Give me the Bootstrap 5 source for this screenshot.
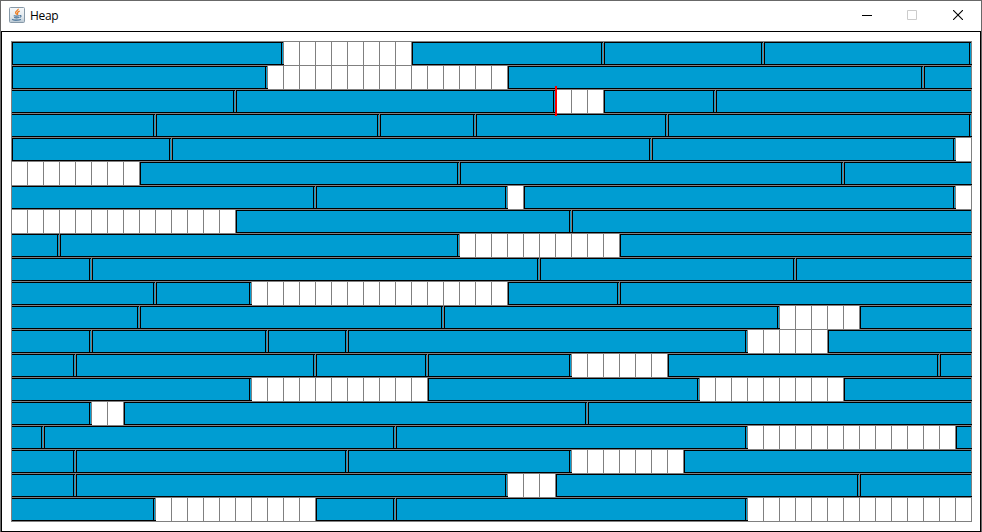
<!DOCTYPE html>
<html lang="en">
<head>
<meta charset="utf-8">
<title>Heap</title>
<link href="https://cdn.jsdelivr.net/npm/bootstrap@5.3.0/dist/css/bootstrap.min.css" rel="stylesheet">
<style>
  body { font-family: "Open Sans", "Noto Sans", sans-serif; font-size: 12px; line-height: 16px; }
  .app-window { border: 1px solid #686868; border-bottom-color: #505050; }
  .title-bar { height: 30px; padding: 0 18px 2px 8px; }
  .title-text { margin: 2px 0 0 5px; color: #000; letter-spacing: -.3px; }
  .window-controls { gap: 35px; }
  .window-controls svg, .java-logo { display: block; }
  .close-mark { margin-left: 1px; }
  .heap-panel { border: 1px solid #000; padding: 9px; }
  .heap-map { width: 961px; height: 481px; border: solid #808080; border-width: 0 1px 1px 0; }
  .heap-row { height: 24px; }
  .seg { width: calc(var(--cells) * 16px); height: 24px; border: solid #808080; border-width: 1px 0 0 1px; }
  .seg-free { border-left: 0; background: repeating-linear-gradient(90deg, #808080 0 1px, #fff 1px 16px); }
  .seg-used { background: #009dd2; }
  .seg-body { height: 22px; border-top: 1px solid #000; }
  .starts .seg-body { border-left: 1px solid #000; }
  .ends .seg-body { background: linear-gradient(#000, #000) right 1px top / 1px 100% no-repeat; }
  .seg-base { height: 1px; margin-right: -1px; background: #000; position: relative; z-index: 1; }
  .scan-pointer { left: 0; top: -4px; width: 2px; height: 30px; background: #f00; z-index: 2; }
</style>
</head>
<body class="m-0 overflow-hidden">
<main class="app-window vh-100 d-flex flex-column bg-white">
  <header class="title-bar d-flex align-items-center flex-shrink-0">
    <svg class="java-logo" width="16" height="16" viewBox="0 0 16 16" fill="none">
      <defs><linearGradient id="tile" x1="0" y1="0" x2="0" y2="1"><stop stop-color="#f7f9fa"/><stop offset=".6" stop-color="#e3e9ee"/><stop offset="1" stop-color="#b9c8d3"/></linearGradient></defs>
      <rect x=".5" y=".5" width="15" height="15" rx="1" fill="url(#tile)" stroke="#8799a8"/>
      <path d="M9.2 1.8c.5 1.6-3.2 2.3-2.6 4 .2.7 1 1.1 1.1 1.9M10.7 4.2C9 4.8 8 5.5 8.6 6.4c.4.7 0 1.1-.5 1.5" stroke="#ee7d22" stroke-width="1.3"/>
      <path d="M4.7 8.7c1.5.5 4.1.5 5.7 0M5.2 10.5c1.5.5 3.3.5 4.7 0M10.7 8.5c2.1-.3 1.6 1.6-.2 2M3.7 12.2c-1.5.9 5.3 1.5 8.2.2" stroke="#3f6c94" stroke-width="1.1"/>
    </svg>
    <span class="title-text">Heap</span>
    <div class="window-controls d-flex ms-auto">
      <svg width="10" height="10" viewBox="0 0 10 10" aria-label="Minimize"><path d="M0 5.5h10" stroke="#000"/></svg>
      <svg width="10" height="10" viewBox="0 0 10 10" aria-label="Maximize"><path d="M.5.5h9v9h-9z" fill="none" stroke="#ccc"/></svg>
      <svg class="close-mark" width="10" height="10" viewBox="0 0 10 10" aria-label="Close"><path d="M0 0l10 10M10 0L0 10" stroke="#000" stroke-width="1.1"/></svg>
    </div>
  </header>
  <section class="heap-panel flex-grow-1">
    <div class="heap-map" id="heap"></div>
  </section>
</main>
<script src="https://cdn.jsdelivr.net/npm/bootstrap@5.3.0/dist/js/bootstrap.bundle.min.js"></script>
<script>
  // Each token is the end cell of a segment in a 60-cell row.
  // "f" = free, "<" = continues from previous row, ">" = continues on next row, "!" = scan pointer.
  const rows = [
    "17 25f 37 47 60",
    "16 31f 57 60>",
    "14< 34 37f! 44 60>",
    "9< 23 29 41 60",
    "10 40 59 60f",
    "8f 28 52 60>",
    "19< 31 32f 59 60f",
    "14f 35 60>",
    "3< 28 38f 60>",
    "5< 33 49 60>",
    "9< 15 31f 38 60>",
    "8< 27 48 53f 60>",
    "5< 16 21 46 51f 60>",
    "4< 19 26 35 41f 58 60>",
    "15< 26f 43 52f 60>",
    "5< 7f 36 60>",
    "2< 24 46 59f 60>",
    "4< 21 35 42f 60>",
    "4< 31 34f 53 60>",
    "9< 19f 24 46 60f"
  ];
  document.getElementById("heap").innerHTML = rows.map(row => {
    let start = 0;
    return '<div class="heap-row d-flex">' + row.split(" ").map(t => {
      const end = parseInt(t, 10), cells = end - start;
      start = end;
      if (t.includes("f")) {
        const pointer = t.includes("!") ? '<div class="scan-pointer position-absolute"></div>' : "";
        return `<div class="seg seg-free flex-shrink-0 position-relative" style="--cells:${cells}">${pointer}</div>`;
      }
      const edges = (t.includes("<") ? "" : " starts") + (t.includes(">") ? "" : " ends");
      return `<div class="seg seg-used flex-shrink-0${edges}" style="--cells:${cells}"><div class="seg-body"></div><div class="seg-base"></div></div>`;
    }).join("") + "</div>";
  }).join("");
</script>
</body>
</html>
